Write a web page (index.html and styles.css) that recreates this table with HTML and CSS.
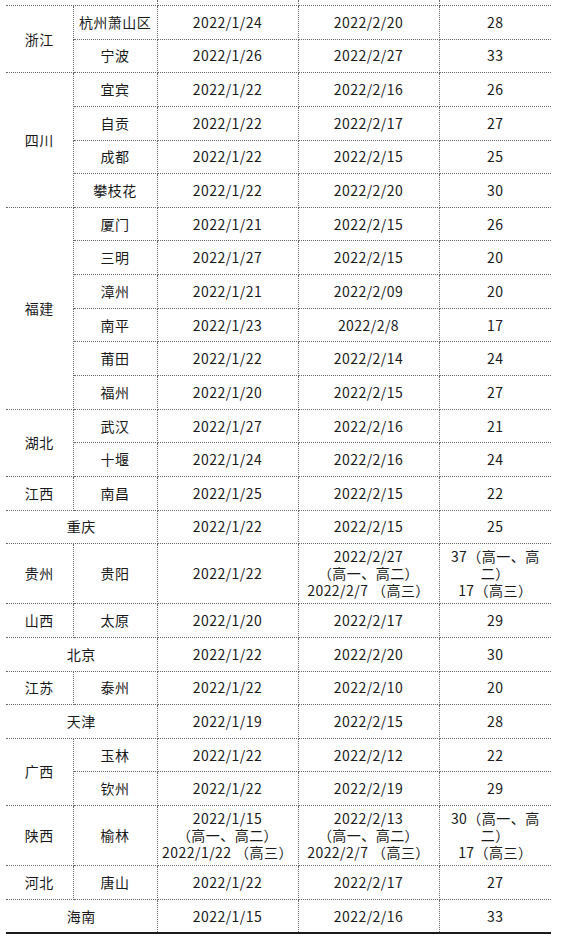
FILE: index.html
```html
<!DOCTYPE html>
<html lang="zh-CN">
<head>
<meta charset="utf-8">
<link rel="stylesheet" href="styles.css">
</head>
<body>
<table class="sched">
<colgroup>
<col class="c-prov"><col class="c-city"><col class="c-date"><col class="c-date"><col class="c-days">
</colgroup>
<tbody>
<tr class="cut"><td colspan="2"></td><td></td><td></td><td></td></tr>
<tr><td rowspan="2">浙江</td><td>杭州萧山区</td><td>2022/1/24</td><td>2022/2/20</td><td>28</td></tr>
<tr><td>宁波</td><td>2022/1/26</td><td>2022/2/27</td><td>33</td></tr>
<tr><td rowspan="4">四川</td><td>宜宾</td><td>2022/1/22</td><td>2022/2/16</td><td>26</td></tr>
<tr><td>自贡</td><td>2022/1/22</td><td>2022/2/17</td><td>27</td></tr>
<tr><td>成都</td><td>2022/1/22</td><td>2022/2/15</td><td>25</td></tr>
<tr><td>攀枝花</td><td>2022/1/22</td><td>2022/2/20</td><td>30</td></tr>
<tr><td rowspan="6">福建</td><td>厦门</td><td>2022/1/21</td><td>2022/2/15</td><td>26</td></tr>
<tr><td>三明</td><td>2022/1/27</td><td>2022/2/15</td><td>20</td></tr>
<tr><td>漳州</td><td>2022/1/21</td><td>2022/2/09</td><td>20</td></tr>
<tr><td>南平</td><td>2022/1/23</td><td>2022/2/8</td><td>17</td></tr>
<tr><td>莆田</td><td>2022/1/22</td><td>2022/2/14</td><td>24</td></tr>
<tr><td>福州</td><td>2022/1/20</td><td>2022/2/15</td><td>27</td></tr>
<tr><td rowspan="2">湖北</td><td>武汉</td><td>2022/1/27</td><td>2022/2/16</td><td>21</td></tr>
<tr><td>十堰</td><td>2022/1/24</td><td>2022/2/16</td><td>24</td></tr>
<tr><td>江西</td><td>南昌</td><td>2022/1/25</td><td>2022/2/15</td><td>22</td></tr>
<tr><td colspan="2">重庆</td><td>2022/1/22</td><td>2022/2/15</td><td>25</td></tr>
<tr class="tall"><td>贵州</td><td>贵阳</td><td>2022/1/22</td><td>2022/2/27<br>（高一、高二）<br>2022/2/7 （高三）</td><td>37（高一、高<br>二）<br>17（高三）</td></tr>
<tr><td>山西</td><td>太原</td><td>2022/1/20</td><td>2022/2/17</td><td>29</td></tr>
<tr><td colspan="2">北京</td><td>2022/1/22</td><td>2022/2/20</td><td>30</td></tr>
<tr><td>江苏</td><td>泰州</td><td>2022/1/22</td><td>2022/2/10</td><td>20</td></tr>
<tr><td colspan="2">天津</td><td>2022/1/19</td><td>2022/2/15</td><td>28</td></tr>
<tr><td rowspan="2">广西</td><td>玉林</td><td>2022/1/22</td><td>2022/2/12</td><td>22</td></tr>
<tr><td>钦州</td><td>2022/1/22</td><td>2022/2/19</td><td>29</td></tr>
<tr class="tall"><td>陕西</td><td>榆林</td><td>2022/1/15<br>（高一、高二）<br>2022/1/22 （高三）</td><td>2022/2/13<br>（高一、高二）<br>2022/2/7 （高三）</td><td>30（高一、高<br>二）<br>17（高三）</td></tr>
<tr><td>河北</td><td>唐山</td><td>2022/1/22</td><td>2022/2/17</td><td>27</td></tr>
<tr><td colspan="2">海南</td><td>2022/1/15</td><td>2022/2/16</td><td>33</td></tr>
</tbody>
</table>
</body>
</html>
```
FILE: styles.css
```css
html, body {
  margin: 0;
  padding: 0;
  background: #ffffff;
}
body {
  padding-left: 6px;
  font-family: "Noto Sans CJK SC", "Noto Sans", sans-serif;
  font-size: 14px;
  color: #1a1a1a;
}
.sched {
  width: 545px;
  table-layout: fixed;
  border-collapse: collapse;
  border-top: hidden;
  border-left: hidden;
  border-right: hidden;
  border-bottom: 2px solid #1a1a1a;
}
.c-prov { width: 67px; }
.c-city { width: 84px; }
.c-date { width: 141px; }
.c-days { width: 112px; }
.sched td {
  border: 1px dotted #6a6a6a;
  padding: 0 2px;
  height: 32.65px;
  text-align: center;
  vertical-align: middle;
  line-height: 17px;
  letter-spacing: 0.45px;
  white-space: nowrap;
}
.sched .cut td {
  height: 5px;
  padding: 0;
}
.sched .tall td {
  height: 59px;
}
```
